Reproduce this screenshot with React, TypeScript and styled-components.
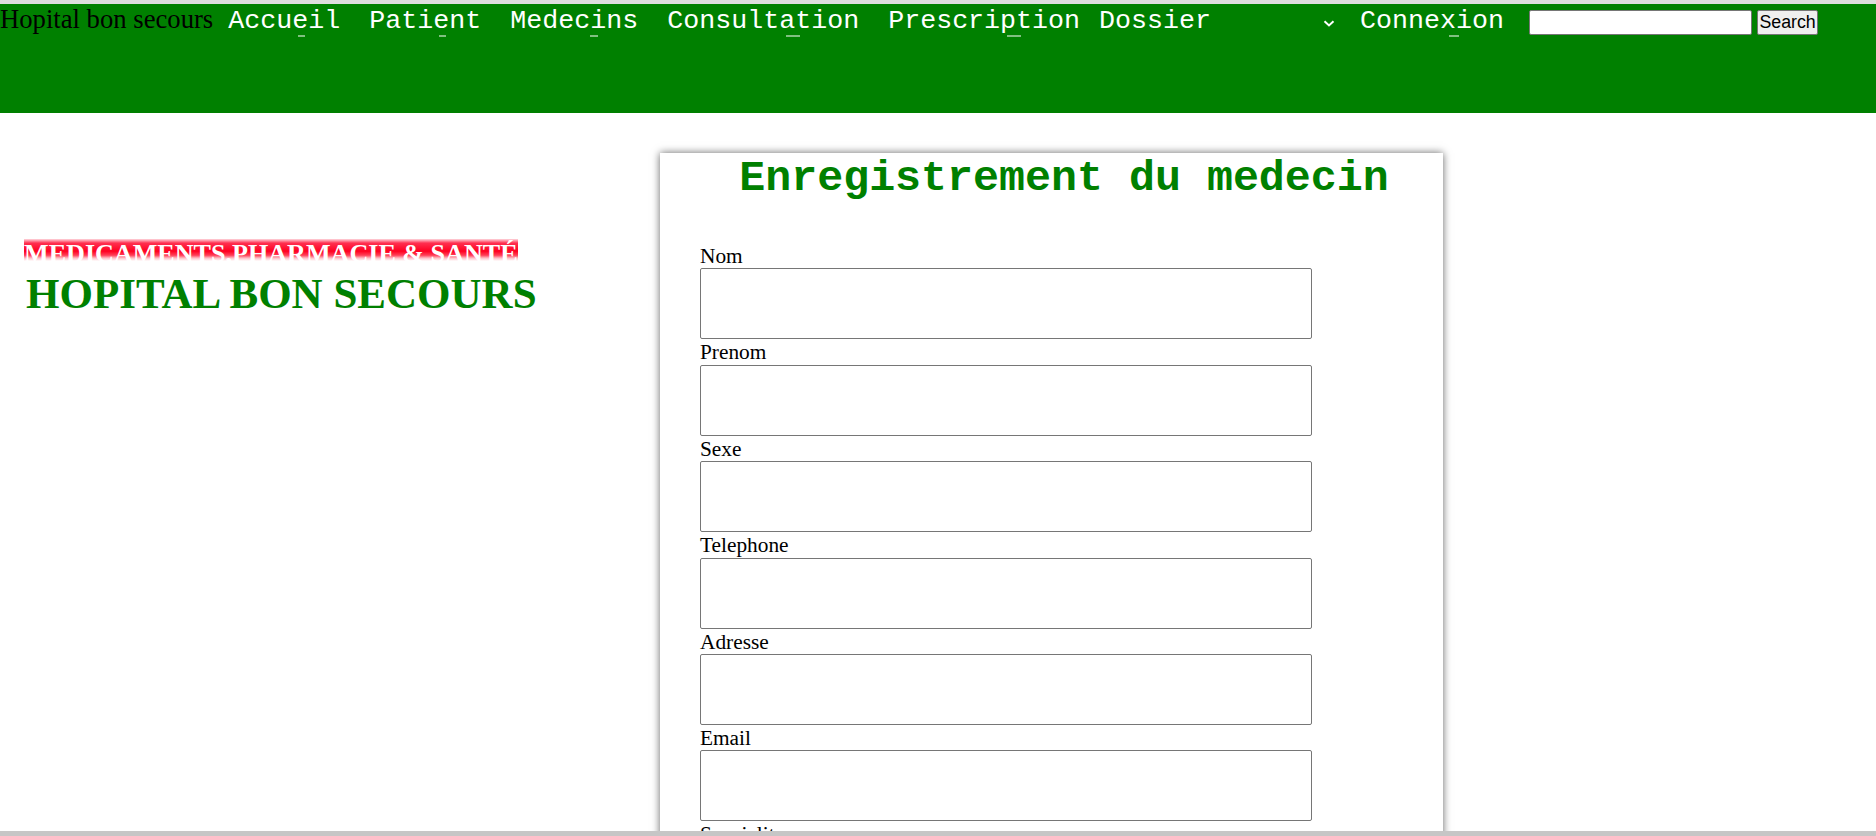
import React from "react";
import styled, { createGlobalStyle } from "styled-components";

const GlobalStyle = createGlobalStyle`
  html, body {
    margin: 0;
    padding: 0;
    overflow: hidden;
    background: #ffffff;
  }
  body {
    font-family: "Liberation Serif", "Times New Roman", serif;
    color: #000000;
  }
`;

const Page = styled.div`
  border-top: 4px solid #dedede;
  min-height: 100vh;
`;

const Header = styled.header`
  height: 109px;
  background: #008000;
  display: flex;
  align-items: baseline;
`;

const Brand = styled.span`
  font-size: 26.67px;
  color: #000000;
  margin-right: 15px;
  white-space: nowrap;
`;

const NavList = styled.ul`
  display: flex;
  align-items: baseline;
  list-style: none;
  margin: 0;
  padding: 0;
`;

const NavItem = styled.li<{ $space: number }>`
  margin-right: ${(p) => p.$space}px;
`;

const NavLink = styled.a`
  position: relative;
  font-family: "Liberation Mono", "Courier New", monospace;
  font-size: 26.67px;
  color: #ffffff;
  text-decoration: none;
  white-space: nowrap;

  &::after {
    content: "";
    position: absolute;
    left: 62%;
    width: 7%;
    top: 29px;
    height: 2px;
    background: rgba(255, 255, 255, 0.5);
  }
`;

const Dropdown = styled.div`
  display: inline-flex;
  align-items: center;
  justify-content: space-between;
  width: 236px;
  font-family: "Liberation Mono", "Courier New", monospace;
  font-size: 26.67px;
  color: #ffffff;
  cursor: pointer;

  svg {
    margin-top: 4px;
  }
`;

const SearchForm = styled.form`
  display: flex;
  align-items: baseline;
  gap: 5px;
`;

const SearchInput = styled.input`
  box-sizing: border-box;
  width: 223px;
  height: 25px;
  padding: 1px 2px;
  border: 1px solid #767676;
  border-radius: 2px;
  background: #ffffff;
  font-family: "Liberation Sans", Arial, sans-serif;
  font-size: 17.78px;
`;

const SearchButton = styled.button`
  box-sizing: border-box;
  width: 61px;
  height: 25px;
  padding: 0;
  border: 1px solid #767676;
  border-radius: 2px;
  background: #efefef;
  color: #000000;
  font-family: "Liberation Sans", Arial, sans-serif;
  font-size: 17.78px;
`;

const Main = styled.main`
  display: flex;
  align-items: flex-start;
`;

const LeftColumn = styled.section`
  box-sizing: border-box;
  width: 660px;
  padding: 126px 0 0 24px;
`;

const Banner = styled.div`
  line-height: normal;
`;

const BannerText = styled.span`
  font-size: 26.1px;
  font-weight: bold;
  color: #ffffff;
  background: linear-gradient(
    to bottom,
    #ffd8de 0%,
    #ff3050 14%,
    #ff0020 42%,
    #ff4058 56%,
    #ffc0c8 66%,
    #ffffff 76%,
    #ffffff 100%
  );
`;

const HospitalTitle = styled.h2`
  margin: 0 0 0 2px;
  font-size: 43px;
  font-weight: bold;
  color: #008000;
  line-height: normal;
  white-space: nowrap;
`;

const Card = styled.section`
  box-sizing: border-box;
  width: 783px;
  margin-top: 40px;
  padding: 1px 15px 60px 40px;
  background: #ffffff;
  box-shadow: 0 0 8px rgba(0, 0, 0, 0.6);
`;

const CardTitle = styled.h1`
  margin: 0 0 41px;
  font-family: "Liberation Mono", "Courier New", monospace;
  font-size: 43.3px;
  font-weight: bold;
  color: #008000;
  text-align: center;
  line-height: normal;
`;

const Field = styled.div`
  display: flex;
  flex-direction: column;
  align-items: flex-start;
`;

const Label = styled.label`
  font-size: 21.33px;
  line-height: 24.4px;
`;

const TextInput = styled.input`
  box-sizing: border-box;
  width: 612px;
  height: 71px;
  margin: 0 0 1px;
  border: 1px solid #767676;
  border-radius: 2px;
  background: #ffffff;
`;

const SubmitButton = styled.button`
  margin-top: 16px;
  font-family: "Liberation Sans", Arial, sans-serif;
  font-size: 17.78px;
`;

const BottomEdge = styled.div`
  position: fixed;
  left: 0;
  right: 0;
  bottom: 0;
  height: 5px;
  background: #c6c6c6;
`;

const links: { label: string; space: number }[] = [
  { label: "Accueil", space: 29 },
  { label: "Patient", space: 29 },
  { label: "Medecins", space: 29 },
  { label: "Consultation", space: 29 },
  { label: "Prescription", space: 19 },
];

const fields = ["Nom", "Prenom", "Sexe", "Telephone", "Adresse", "Email", "Specialite"];

function Chevron() {
  return (
    <svg width="12" height="7" viewBox="0 0 12 7" aria-hidden="true">
      <path d="M1.5 1.2 L6 5.4 L10.5 1.2" fill="none" stroke="#ffffff" strokeWidth="2" />
    </svg>
  );
}

export default function App() {
  return (
    <>
      <GlobalStyle />
      <Page>
        <Header>
          <Brand>Hopital bon secours</Brand>
          <NavList>
            {links.map((l) => (
              <NavItem key={l.label} $space={l.space}>
                <NavLink href="#">{l.label}</NavLink>
              </NavItem>
            ))}
            <NavItem $space={25}>
              <Dropdown>
                <span>Dossier</span>
                <Chevron />
              </Dropdown>
            </NavItem>
            <NavItem $space={25}>
              <NavLink href="#">Connexion</NavLink>
            </NavItem>
          </NavList>
          <SearchForm onSubmit={(e) => e.preventDefault()}>
            <SearchInput type="text" />
            <SearchButton type="submit">Search</SearchButton>
          </SearchForm>
        </Header>
        <Main>
          <LeftColumn>
            <Banner>
              <BannerText>MEDICAMENTS,PHARMACIE &amp; SANTÉ</BannerText>
            </Banner>
            <HospitalTitle>HOPITAL BON SECOURS</HospitalTitle>
          </LeftColumn>
          <Card>
            <CardTitle>Enregistrement du medecin</CardTitle>
            <form onSubmit={(e) => e.preventDefault()}>
              {fields.map((f) => (
                <Field key={f}>
                  <Label htmlFor={f}>{f}</Label>
                  <TextInput id={f} type="text" />
                </Field>
              ))}
              <SubmitButton type="submit">Enregistrer</SubmitButton>
            </form>
          </Card>
        </Main>
        <BottomEdge />
      </Page>
    </>
  );
}
